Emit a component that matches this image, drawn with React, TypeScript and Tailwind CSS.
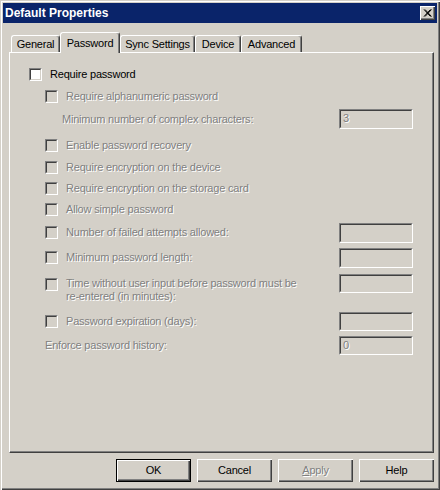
import React from "react";

const dis = "text-[#808080] [text-shadow:1px_1px_0_#ffffff]";

function Check({ disabled }: { disabled?: boolean }) {
  return (
    <span className="inline-block w-[13px] h-[13px] shrink-0 border border-t-[#808080] border-l-[#808080] border-b-white border-r-white">
      <span
        className={`block w-full h-full border border-t-[#404040] border-l-[#404040] border-b-[#d4d0c8] border-r-[#d4d0c8] ${
          disabled ? "bg-[#d4d0c8]" : "bg-white"
        }`}
      />
    </span>
  );
}

function Field({ value, h = 20 }: { value?: string; h?: number }) {
  return (
    <div
      className={`w-[74px] ${h === 19 ? "h-[19px]" : "h-[20px]"} shrink-0 border border-t-[#808080] border-l-[#808080] border-b-white border-r-white`}
    >
      <div className="h-full border border-t-[#404040] border-l-[#404040] border-b-[#d4d0c8] border-r-[#d4d0c8] pl-[2px] leading-[15px] text-[11px] text-[#808080]">
        {value}
      </div>
    </div>
  );
}

function Tab({ label, w, selected }: { label: string; w: string; selected?: boolean }) {
  return (
    <div
      className={`${w} flex items-center justify-center bg-[#d4d0c8] border-l border-t border-r border-l-white border-t-white border-r-[#404040] shadow-[inset_-1px_0_0_#808080] rounded-t-[3px] ${
        selected ? "h-[21px] relative z-10" : "h-[17px] mb-[1px]"
      }`}
    >
      <span className="text-[11px] leading-[13px] text-black">{label}</span>
    </div>
  );
}

function Btn({ children, def, disabled }: { children: React.ReactNode; def?: boolean; disabled?: boolean }) {
  return (
    <div
      className={`w-[75px] h-[23px] flex items-center justify-center bg-[#d4d0c8] text-[11px] ${
        def
          ? "border border-black shadow-[inset_1px_1px_0_#ffffff,inset_-1px_-1px_0_#404040,inset_-2px_-2px_0_#808080]"
          : "shadow-[inset_1px_1px_0_#ffffff,inset_-1px_-1px_0_#404040,inset_-2px_-2px_0_#808080]"
      } ${disabled ? dis : "text-black"}`}
    >
      {children}
    </div>
  );
}

export default function App() {
  return (
    <div className="w-[440px] h-[490px] bg-[#d4d0c8] font-['Liberation_Sans',Arial,sans-serif] tracking-[-0.2px] flex flex-col shadow-[inset_1px_1px_0_#d4d0c8,inset_2px_2px_0_#ffffff,inset_-1px_-1px_0_#404040,inset_-2px_-2px_0_#808080] pt-[3px] px-[3px] overflow-hidden">
      {/* Title bar */}
      <div className="h-[20px] bg-[#0a246a] flex items-center justify-between pl-[2px] pr-[2px]">
        <span className="text-white font-bold text-[12px] tracking-normal leading-[14px]">Default Properties</span>
        <div className="w-[15px] h-[14px] bg-[#d4d0c8] flex items-center justify-center shadow-[inset_1px_1px_0_#ffffff,inset_-1px_-1px_0_#404040,inset_-2px_-2px_0_#808080]">
          <svg width="9" height="8" viewBox="0 0 9 8">
            <path d="M1 0.5 L7.5 7.5 M2 0.5 L8.5 7.5 M7.5 0.5 L1 7.5 M8.5 0.5 L2 7.5" stroke="#000" strokeWidth="1" fill="none" />
          </svg>
        </div>
      </div>

      {/* Tabs */}
      <div className="flex items-end h-[21px] mt-[9px] ml-[8px]">
        <Tab label="General" w="w-[49px]" />
        <Tab label="Password" w="w-[60px]" selected />
        <Tab label="Sync Settings" w="w-[75px]" />
        <Tab label="Device" w="w-[46px]" />
        <Tab label="Advanced" w="w-[61px]" />
      </div>

      {/* Panel */}
      <div className="-mt-[1px] ml-[6px] mr-[3px] h-[401px] border-l border-t border-r border-b border-l-white border-t-white border-r-[#404040] border-b-[#404040] shadow-[inset_-1px_-1px_0_#808080] flex flex-col text-[11px] pr-[20px]">
        <div className="mt-[11px] h-[20px] flex items-center pl-[19px] gap-[8px] text-black">
          <Check />
          <span>Require password</span>
        </div>
        <div className={`h-[24px] flex items-center pl-[35px] gap-[8px] ${dis}`}>
          <Check disabled />
          <span>Require alphanumeric password</span>
        </div>
        <div className={`h-[22px] flex items-center justify-between pl-[52px] ${dis}`}>
          <span>Minimum number of complex characters:</span>
          <Field value="3" />
        </div>
        <div className={`mt-[4px] h-[22px] flex items-center pl-[35px] gap-[8px] ${dis}`}>
          <Check disabled />
          <span>Enable password recovery</span>
        </div>
        <div className={`h-[22px] flex items-center pl-[35px] gap-[8px] ${dis}`}>
          <Check disabled />
          <span>Require encryption on the device</span>
        </div>
        <div className={`h-[20px] flex items-center pl-[35px] gap-[8px] ${dis}`}>
          <Check disabled />
          <span>Require encryption on the storage card</span>
        </div>
        <div className={`h-[22px] flex items-center pl-[35px] gap-[8px] ${dis}`}>
          <Check disabled />
          <span>Allow simple password</span>
        </div>
        <div className={`mt-[2px] h-[21px] flex items-center pl-[35px] gap-[8px] ${dis}`}>
          <Check disabled />
          <span className="flex-1">Number of failed attempts allowed:</span>
          <Field />
        </div>
        <div className={`mt-[4px] h-[21px] flex items-center pl-[35px] gap-[8px] ${dis}`}>
          <Check disabled />
          <span className="flex-1">Minimum password length:</span>
          <Field />
        </div>
        <div className={`mt-[6px] h-[30px] flex items-start pl-[35px] gap-[8px] ${dis}`}>
          <span className="mt-[4px]">
            <Check disabled />
          </span>
          <span className="flex-1 pt-[3px] leading-[13px]">
            Time without user input before password must be
            <br />
            re-entered (in minutes):
          </span>
          <Field h={19} />
        </div>
        <div className={`mt-[7px] h-[20px] flex items-center pl-[35px] gap-[8px] ${dis}`}>
          <Check disabled />
          <span className="flex-1">Password expiration (days):</span>
          <Field h={19} />
        </div>
        <div className={`mt-[4px] h-[20px] flex items-center justify-between pl-[35px] ${dis}`}>
          <span>Enforce password history:</span>
          <Field value="0" h={19} />
        </div>
      </div>

      {/* Buttons */}
      <div className="mt-[6px] flex justify-end gap-[6px] mr-[3px]">
        <Btn def>OK</Btn>
        <Btn>Cancel</Btn>
        <Btn disabled>
          <span>
            <span className="underline">A</span>pply
          </span>
        </Btn>
        <Btn>Help</Btn>
      </div>
    </div>
  );
}
